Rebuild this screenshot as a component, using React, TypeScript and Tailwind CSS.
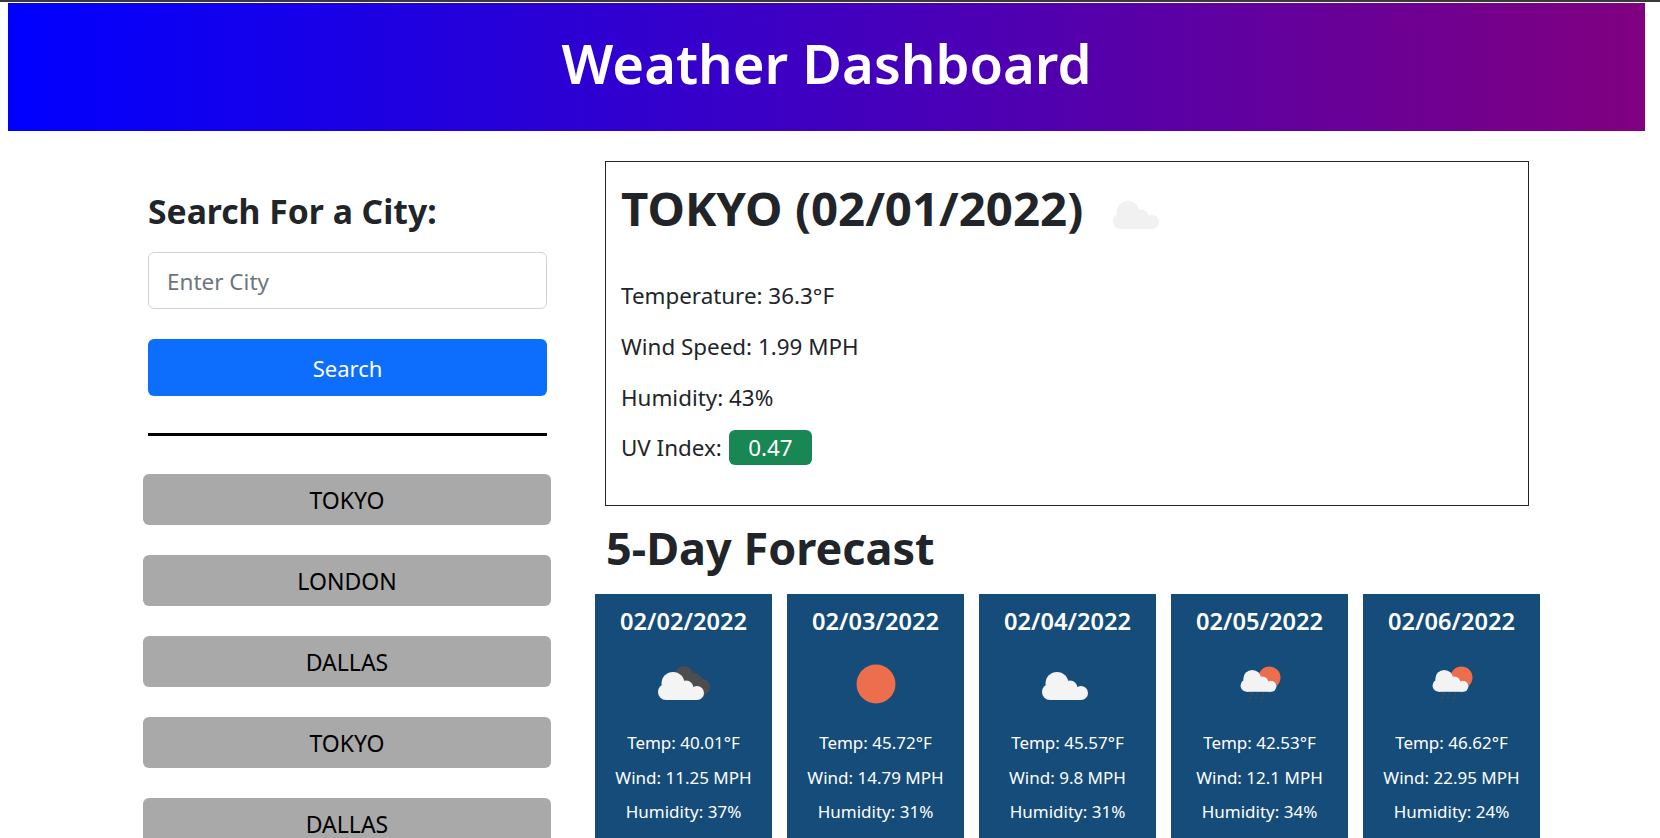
import React from "react";

const cities = ["TOKYO", "LONDON", "DALLAS", "TOKYO", "DALLAS"];

const forecast = [
  { date: "02/02/2022", icon: "night", temp: "40.01", wind: "11.25", humidity: "37" },
  { date: "02/03/2022", icon: "sun", temp: "45.72", wind: "14.79", humidity: "31" },
  { date: "02/04/2022", icon: "cloud", temp: "45.57", wind: "9.8", humidity: "31" },
  { date: "02/05/2022", icon: "rain", temp: "42.53", wind: "12.1", humidity: "34" },
  { date: "02/06/2022", icon: "rain", temp: "46.62", wind: "22.95", humidity: "24" },
];

function CloudShape({ fill, dx = 0, dy = 0, scale = 1 }: { fill: string; dx?: number; dy?: number; scale?: number }) {
  return (
    <g fill={fill} transform={`translate(${dx} ${dy}) scale(${scale})`}>
      <circle cx="38" cy="34.5" r="11.5" />
      <circle cx="51" cy="39" r="7.5" />
      <circle cx="62" cy="44" r="7" />
      <circle cx="31" cy="43" r="8" />
      <rect x="31" y="38" width="31" height="13" />
    </g>
  );
}

function WeatherIcon({ type }: { type: string }) {
  return (
    <svg viewBox="0 0 100 60" className="w-[100px] h-[60px] shrink-0">
      {type === "night" && (
        <g fill="#4d4d4f">
          <circle cx="50" cy="26" r="9" />
          <circle cx="60" cy="32" r="8" />
          <circle cx="68" cy="38" r="8" />
          <rect x="52" y="32" width="20" height="14" />
        </g>
      )}
      {type === "sun" && <circle cx="50" cy="35" r="19.5" fill="#ec6e4c" />}
      {type === "rain" && (
        <>
          <circle cx="59.5" cy="28.5" r="11" fill="#ec6e4c" />
          <g stroke="#4d4d4f" strokeWidth="1.5" strokeDasharray="3 1.5" opacity="0.8">
            <path d="M42 43 L39 53" />
            <path d="M48 43 L45 51" />
            <path d="M54 43 L51 54" />
          </g>
          <CloudShape fill="#f3f3f3" dx={12.6} dy={3} scale={0.78} />
        </>
      )}
      {type !== "sun" && type !== "rain" && <CloudShape fill={type === "plain" ? "#f1f1f1" : "#f4f4f4"} dx={1} />}
    </svg>
  );
}

export default function App() {
  return (
    <div className="h-screen overflow-hidden bg-white border-t-2 border-[#3a3a3a] pt-px pl-2 pr-[15px] text-[#212529] font-['Noto_Sans','Open_Sans',sans-serif]">
      <header className="h-[128px] pb-[7px] flex items-center justify-center bg-[linear-gradient(to_right,#0000ff,#800080)]">
        <h1 className="text-[54.4px] font-semibold text-white">Weather Dashboard</h1>
      </header>

      <div className="flex">
        <aside className="w-[408px] ml-[135px] shrink-0 pt-[57px]">
          <div className="pl-[5px] pr-[4px]">
            <h2 className="text-[33.7px] leading-[46px] font-bold">Search For a City:</h2>
            <input
              placeholder="Enter City"
              className="mt-[18px] w-full h-[57px] px-[18px] pt-px text-[22.5px] bg-white border border-[#ced4da] rounded-[6px] placeholder:text-[#6c757d]"
            />
            <button className="mt-[30px] w-full h-[57px] pt-px text-[22px] text-white bg-[#0d6efd] rounded-[6px]">Search</button>
            <hr className="mt-[37px] border-0 h-[3px] bg-black" />
          </div>
          <div className="mt-[38px] flex flex-col gap-[30px]">
            {cities.map((city, i) => (
              <button key={i} className="h-[51px] pt-px text-[23px] text-black bg-[#a9a9a9] rounded-[6px]">
                {city}
              </button>
            ))}
          </div>
        </aside>

        <main className="w-[945px] ml-[44px] shrink-0 pt-[30px]">
          <section className="ml-[10px] mr-[11px] h-[345px] border border-[#212529] px-[15px] pt-[14px]">
            <div className="flex items-center gap-[6px]">
              <h2 className="text-[47.4px] leading-[64px] font-bold">TOKYO (02/01/2022)</h2>
              <WeatherIcon type="plain" />
            </div>
            <p className="mt-[40px] text-[22.4px] leading-[32px]">Temperature: 36.3°F</p>
            <p className="mt-[19px] text-[22.4px] leading-[32px]">Wind Speed: 1.99 MPH</p>
            <p className="mt-[19px] text-[22.4px] leading-[32px]">Humidity: 43%</p>
            <p className="mt-[16px] text-[22.4px] leading-[34px] flex items-center">
              UV Index:
              <span className="ml-[7px] w-[83px] h-[35px] flex items-center justify-center bg-[#198754] text-white rounded-[6px]">0.47</span>
            </p>
          </section>

          <h2 className="ml-[11px] mt-[10px] text-[45px] leading-[64px] font-bold">5-Day Forecast</h2>

          <div className="mt-[14px] flex gap-[15px]">
            {forecast.map((day) => (
              <div key={day.date} className="w-[177px] h-[260px] shrink-0 bg-[#154c79] text-white text-center">
                <h3 className="pt-[11px] text-[23.6px] leading-[32px] font-semibold">{day.date}</h3>
                <div className="mt-[12px] flex justify-center">
                  <WeatherIcon type={day.icon} />
                </div>
                <p className="mt-[17px] text-[17px] leading-[34px]">Temp: {day.temp}°F</p>
                <p className="text-[17px] leading-[35px]">Wind: {day.wind} MPH</p>
                <p className="text-[17px] leading-[34px]">Humidity: {day.humidity}%</p>
              </div>
            ))}
          </div>
        </main>
      </div>
    </div>
  );
}
